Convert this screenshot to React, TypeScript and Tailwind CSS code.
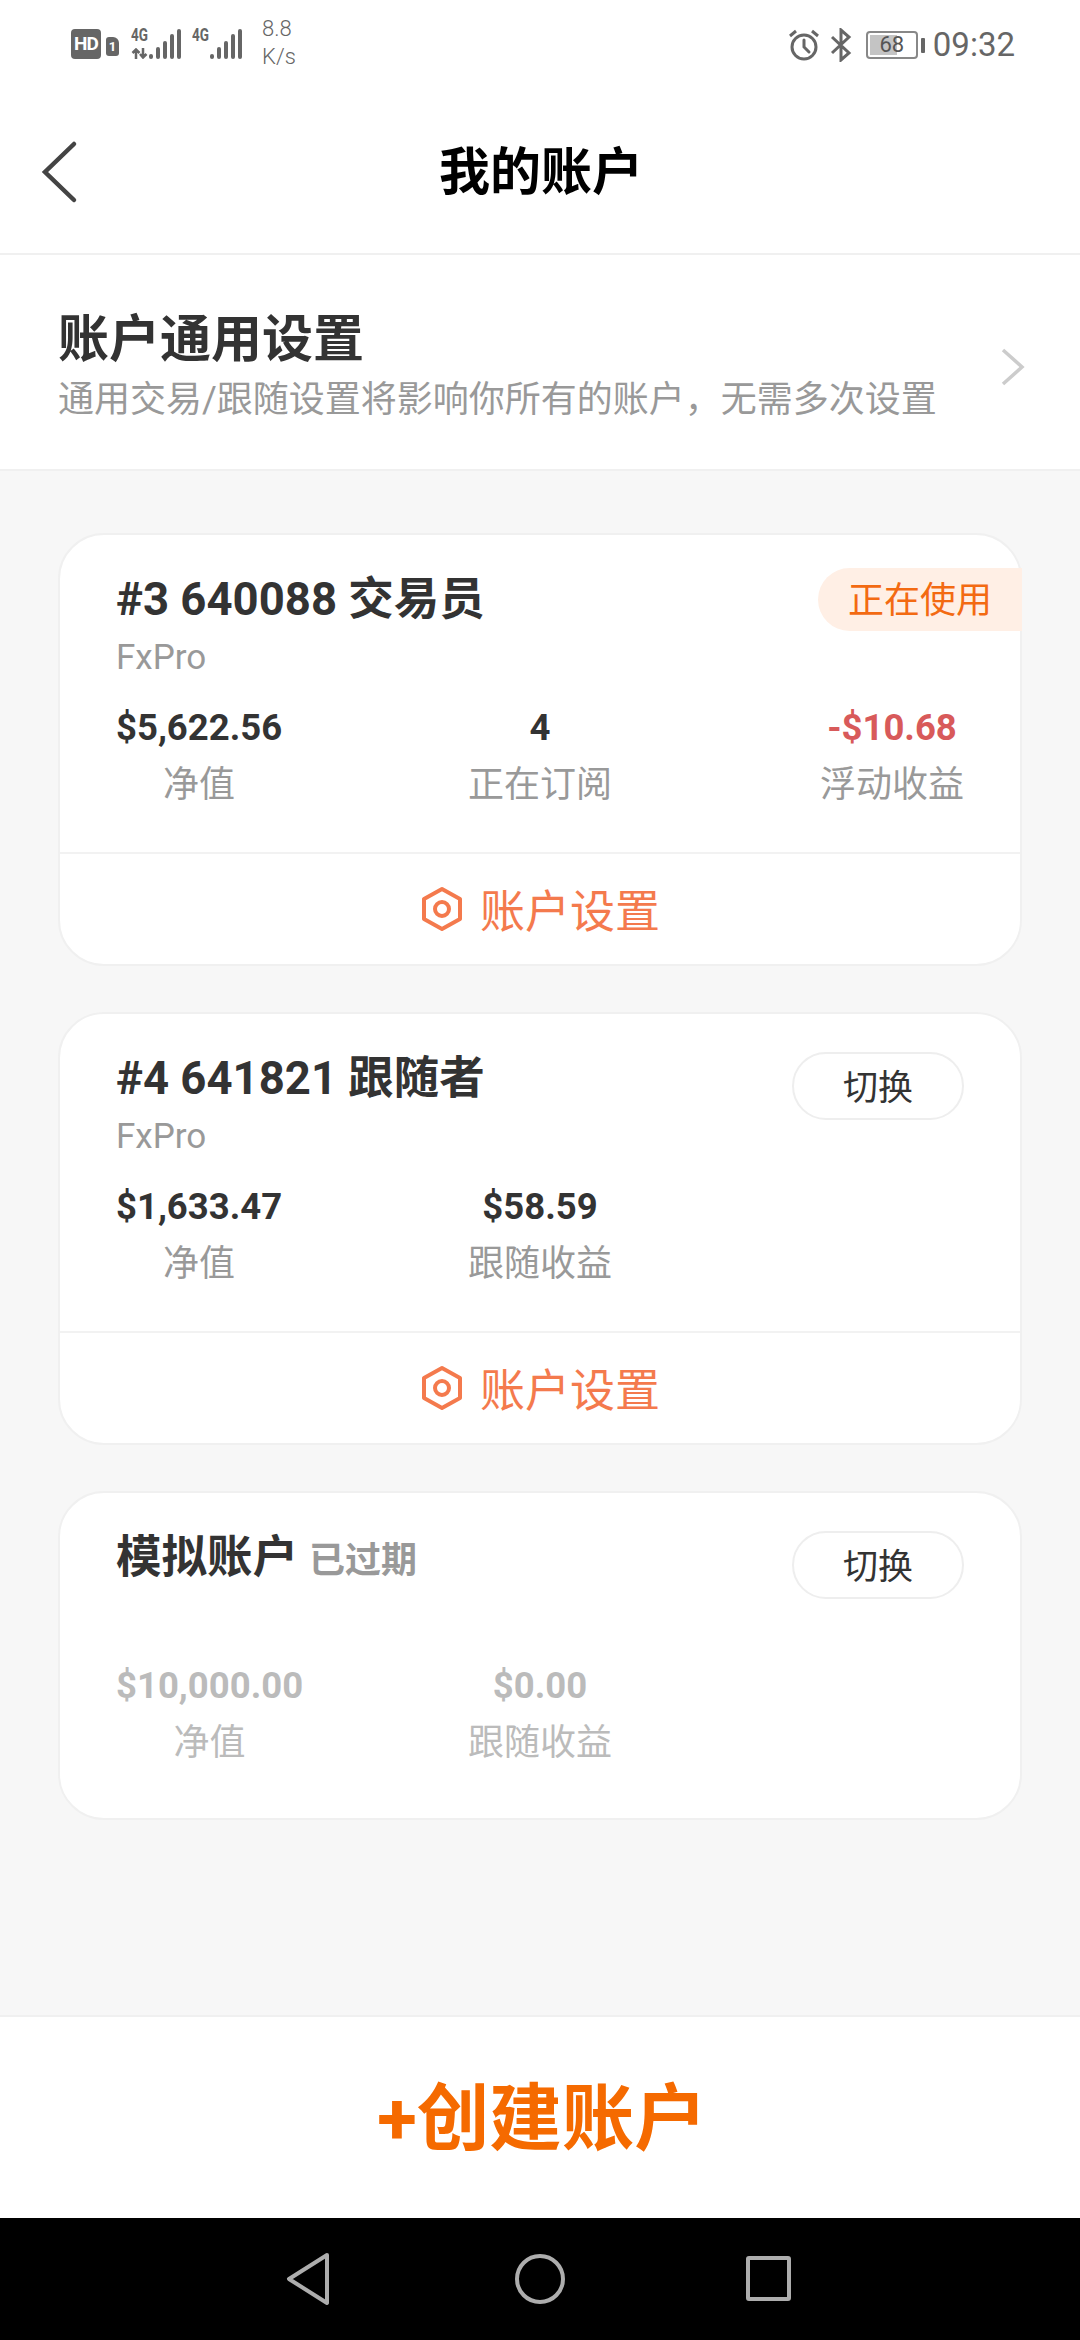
import React from "react";

const sans = "font-['Roboto','Noto_Sans_CJK_SC',sans-serif]";

function Signal({ bars }: { bars: number[] }) {
  return (
    <div className="flex items-end gap-[3px]">
      {bars.map((h, i) => (
        <div key={i} className="w-[4px] rounded-[2px] bg-[#666]" style={{ height: h }} />
      ))}
    </div>
  );
}

function StatusBar() {
  return (
    <div className="h-[90px] flex items-start justify-between pl-[71px] pr-[65px] text-[#666]">
      <div className="flex items-center pt-[17px]">
        <div className="w-[30px] h-[30px] rounded-[4px] bg-[#666] text-white text-[19px] font-bold leading-[30px] text-center tracking-[-1px] font-['Roboto',sans-serif]">
          HD
        </div>
        <div className="ml-[5px] mt-[5px] w-[13px] h-[19px] rounded-[3px] rounded-tr-[6px] bg-[#666] text-white text-[13px] font-bold leading-[19px] text-center">
          1
        </div>
        <div className="relative ml-[12px] w-[50px] h-[30px]">
          <span className="absolute left-0 top-[-4px] text-[18px] font-bold scale-x-75 origin-left leading-[20px] font-['Roboto',sans-serif]">4G</span>
          <svg className="absolute left-0 bottom-0" width="17" height="11" viewBox="0 0 17 11" fill="none" stroke="#666" strokeWidth="2.5">
            <path d="M5 11V2M1.5 5L5 1.5 8.5 5M12 0v9M9 6l3 3.5L15.5 6" />
          </svg>
          <div className="absolute right-0 bottom-0">
            <Signal bars={[5, 12, 18, 25, 30]} />
          </div>
        </div>
        <div className="relative ml-[11px] w-[50px] h-[30px]">
          <span className="absolute left-0 top-[-4px] text-[18px] font-bold scale-x-75 origin-left leading-[20px] font-['Roboto',sans-serif]">4G</span>
          <div className="absolute right-0 bottom-0">
            <Signal bars={[5, 12, 18, 25, 30]} />
          </div>
        </div>
        <div className="ml-[20px] mt-[-2px] text-[22px] leading-[28px] font-['Roboto',sans-serif] font-light">
          <div>8.8</div>
          <div>K/s</div>
        </div>
      </div>
      <div className="flex items-center pt-[28px]">
        <svg width="32" height="32" viewBox="0 0 32 32" fill="none" stroke="#666" strokeWidth="3">
          <circle cx="16" cy="18" r="12" />
          <path d="M16 11v7l5 5" strokeLinecap="round" />
          <path d="M2 7l6-5M30 7l-6-5" />
        </svg>
        <svg className="ml-[10px]" width="22" height="34" viewBox="0 0 22 34" fill="none" stroke="#666" strokeWidth="3">
          <path d="M2 9l17 16-8 7V2l8 7L2 25" />
        </svg>
        <div className="ml-[14px] w-[52px] h-[28px] rounded-[4px] border-2 border-[#888] p-[2px] relative">
          <div className="h-full w-[62%] bg-[#c4c4c4]" />
          <span className="absolute inset-0 text-center text-[22px] leading-[24px] font-['Roboto',sans-serif] text-[#555]">68</span>
        </div>
        <div className="ml-[3px] w-[4px] h-[15px] bg-[#666] rounded-[1px]" />
        <div className="ml-[8px] text-[33px] leading-[34px] font-['Roboto',sans-serif]">09:32</div>
      </div>
    </div>
  );
}

function SettingsIcon() {
  return (
    <svg width="44" height="46" viewBox="0 0 44 46" fill="none" stroke="#f47a4d" strokeWidth="4">
      <path d="M22 3l18 10v20L22 43 4 33V13z" strokeLinejoin="round" />
      <circle cx="22" cy="23" r="7" />
    </svg>
  );
}

function Stat({ value, label, align, valueClass, labelClass }: { value: string; label: string; align: string; valueClass?: string; labelClass?: string }) {
  return (
    <div className={`${align} flex flex-col items-center`}>
      <div className={`text-[36.5px] leading-[44px] font-bold ${valueClass ?? "text-[#333]"}`}>{value}</div>
      <div className={`mt-[13px] text-[36px] leading-[44px] ${labelClass ?? "text-[#999]"}`}>{label}</div>
    </div>
  );
}

function CardFooter() {
  return (
    <div className="h-[112px] border-t-2 border-[#f2f2f2] flex items-center justify-center gap-[16px]">
      <SettingsIcon />
      <span className="text-[45px] leading-[56px] pt-[8px] text-[#f47a4d]">账户设置</span>
    </div>
  );
}

function SwitchButton() {
  return (
    <div className="w-[172px] h-[68px] rounded-full border-2 border-[#eee] flex items-center justify-center text-[35px] pt-[6px] text-[#333]">
      切换
    </div>
  );
}

export default function App() {
  return (
    <div className={`w-[1080px] h-[2340px] flex flex-col bg-white ${sans}`}>
      <StatusBar />

      <div className="h-[165px] border-b-2 border-[#f0f0f0] relative flex items-center justify-center pt-[2px] pl-[2px]">
        <svg className="absolute left-[40px] top-[50px]" width="40" height="64" viewBox="0 0 40 64" fill="none" stroke="#444" strokeWidth="4.5" strokeLinecap="round">
          <path d="M34 4L5 32l29 28" />
        </svg>
        <h1 className="text-[51px] leading-[60px] font-bold text-black">我的账户</h1>
      </div>

      <div className="h-[216px] border-b-2 border-[#f0f0f0] pl-[58px] pr-[54px] pt-[9px] flex items-center justify-between">
        <div>
          <div className="text-[51px] leading-[60px] font-bold text-[#333]">账户通用设置</div>
          <div className="mt-[7px] text-[36px] leading-[46px] text-[#999]">通用交易/跟随设置将影响你所有的账户，无需多次设置</div>
        </div>
        <svg width="26" height="40" viewBox="0 0 26 40" fill="none" stroke="#ccc" strokeWidth="3.5">
          <path d="M3 3l19 17L3 37" />
        </svg>
      </div>

      <main className="flex-1 bg-[#f7f7f7] px-[58px] pt-[62px] flex flex-col gap-[46px]">
        {/* 交易员 */}
        <section className="relative bg-white border-2 border-[#f0f0f0] rounded-[46px]">
          <div className="h-[317px] px-[56px] pt-[37px]">
            <div className="text-[45.5px] leading-[56px] font-bold text-[#333]">#3 640088 交易员</div>
            <div className="text-[35px] leading-[44px] text-[#999] mt-[8px]">FxPro</div>
            <div className="grid grid-cols-3 mt-[26px]">
              <Stat value="$5,622.56" label="净值" align="justify-self-start" />
              <Stat value="4" label="正在订阅" align="justify-self-center" />
              <Stat value="-$10.68" label="浮动收益" align="justify-self-end" valueClass="text-[#d85a5a]" />
            </div>
          </div>
          <div className="absolute right-[-2px] top-[33px] w-[204px] h-[63px] rounded-l-full bg-[#ffefe5] text-[#f36a12] text-[36px] leading-[63px] pt-[2px] pl-[30px]">
            正在使用
          </div>
          <CardFooter />
        </section>

        {/* 跟随者 */}
        <section className="bg-white border-2 border-[#f0f0f0] rounded-[46px]">
          <div className="h-[317px] px-[56px] pt-[37px] relative">
            <div className="flex items-start justify-between">
              <div>
                <div className="text-[45.5px] leading-[56px] font-bold text-[#333]">#4 641821 跟随者</div>
                <div className="text-[35px] leading-[44px] text-[#999] mt-[8px]">FxPro</div>
              </div>
              <div className="mt-[1px]">
                <SwitchButton />
              </div>
            </div>
            <div className="grid grid-cols-3 mt-[26px]">
              <Stat value="$1,633.47" label="净值" align="justify-self-start" />
              <Stat value="$58.59" label="跟随收益" align="justify-self-center" />
            </div>
          </div>
          <CardFooter />
        </section>

        {/* 模拟账户 */}
        <section className="h-[329px] bg-white border-2 border-[#f0f0f0] rounded-[46px] px-[56px] pt-[37px]">
          <div className="flex items-start justify-between h-[103px]">
            <div className="flex items-baseline gap-[11px]">
              <span className="text-[45.5px] leading-[56px] font-bold text-[#333]">模拟账户</span>
              <span className="text-[36px] leading-[44px] font-bold text-[#999]">已过期</span>
            </div>
            <div className="mt-[1px]">
              <SwitchButton />
            </div>
          </div>
          <div className="grid grid-cols-3 mt-[31px]">
            <Stat value="$10,000.00" label="净值" align="justify-self-start" valueClass="text-[#bbb]" labelClass="text-[#bbb]" />
            <Stat value="$0.00" label="跟随收益" align="justify-self-center" valueClass="text-[#bbb]" labelClass="text-[#bbb]" />
          </div>
        </section>
      </main>

      <div className="h-[203px] border-t-2 border-[#f0f0f0] flex items-center justify-center pl-[4px]">
        <span className="text-[72.5px] leading-[90px] pt-[5px] font-bold text-[#f56a00]">+创建账户</span>
      </div>

      <nav className="h-[122px] bg-black relative flex items-center">
        <svg className="absolute left-[286px] top-[34px]" width="46" height="54" viewBox="0 0 46 54" fill="none" stroke="#adadad" strokeWidth="4" strokeLinejoin="round">
          <path d="M41 3L3 27l38 24z" />
        </svg>
        <svg className="absolute left-[515px] top-[36px]" width="50" height="50" viewBox="0 0 50 50" fill="none" stroke="#adadad" strokeWidth="4">
          <circle cx="25" cy="25" r="23" />
        </svg>
        <div className="absolute left-[746px] top-[38px] w-[45px] h-[45px] rounded-[3px] border-4 border-[#adadad]" />
      </nav>
    </div>
  );
}
